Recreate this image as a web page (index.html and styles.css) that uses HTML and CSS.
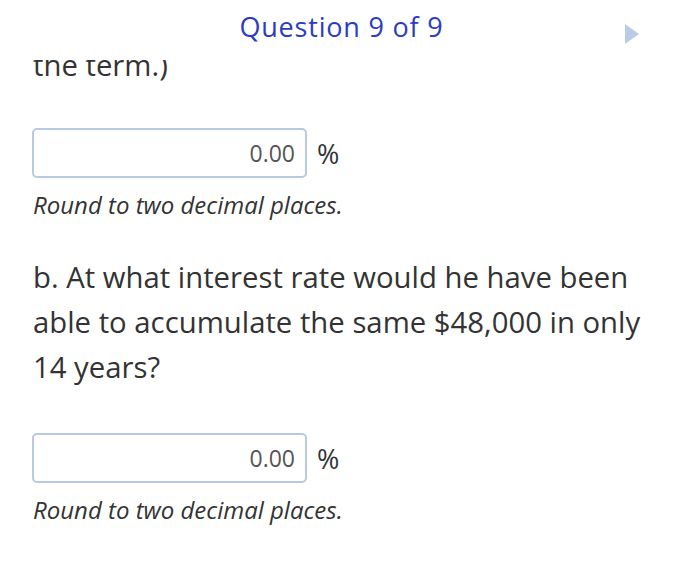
FILE: index.html
```html
<!DOCTYPE html>
<html lang="en">
<head>
<meta charset="utf-8">
<link rel="stylesheet" href="styles.css">
</head>
<body>
<div class="screen">
  <header class="topbar">
    <h1 class="title">Question 9 of 9</h1>
    <svg class="next" width="14" height="20" viewBox="0 0 14 20"><polygon points="0,0 14,10 0,20" fill="#b9cbe8"/></svg>
  </header>
  <main class="content">
    <p class="prose cut">the term.)</p>
    <div class="answer first">
      <div class="field"><span class="val">0.00</span></div>
      <span class="unit">%</span>
    </div>
    <p class="hint">Round to two decimal places.</p>
    <p class="prose q">b. At what interest rate would he have been able to accumulate the same $48,000 in only 14 years?</p>
    <div class="answer second">
      <div class="field"><span class="val">0.00</span></div>
      <span class="unit">%</span>
    </div>
    <p class="hint">Round to two decimal places.</p>
  </main>
</div>
</body>
</html>
```
FILE: styles.css
```css
html, body {
  margin: 0;
  padding: 0;
  background: #fff;
}
.screen {
  position: relative;
  width: 700px;
  height: 569px;
  overflow: hidden;
  font-family: "Open Sans", "DejaVu Sans", sans-serif;
  color: #333;
}
.topbar {
  position: absolute;
  top: 0;
  left: 0;
  right: 0;
  height: 60px;
  background: #fff;
  z-index: 2;
}
.title {
  margin: 0;
  text-align: center;
  font-weight: 400;
  font-size: 27px;
  line-height: 53px;
  letter-spacing: 0.8px;
  color: #2b3cc2;
  padding-right: 17px;
}
.next {
  position: absolute;
  left: 625px;
  top: 24px;
}
.content {
  padding: 0 33px;
}
.prose {
  margin: 0;
  font-size: 29.3px;
  line-height: 45px;
}
.cut {
  margin-top: 43px;
}
.answer {
  display: flex;
  align-items: center;
  gap: 10px;
}
.answer.first {
  margin-top: 40px;
}
.answer.second {
  margin-top: 43px;
}
.field {
  box-sizing: border-box;
  width: 275px;
  height: 50px;
  margin-left: -1px;
  border: 2px solid #b9c8e4;
  border-radius: 5px;
  display: flex;
  align-items: center;
  justify-content: flex-end;
  padding-right: 10px;
}
.val {
  font-size: 23px;
  color: #555;
}
.unit {
  font-size: 27px;
  color: #333;
}
.hint {
  margin: 12px 0 0;
  font-size: 24px;
  font-style: italic;
  line-height: 30px;
}
.q {
  margin-top: 35px;
}
```
